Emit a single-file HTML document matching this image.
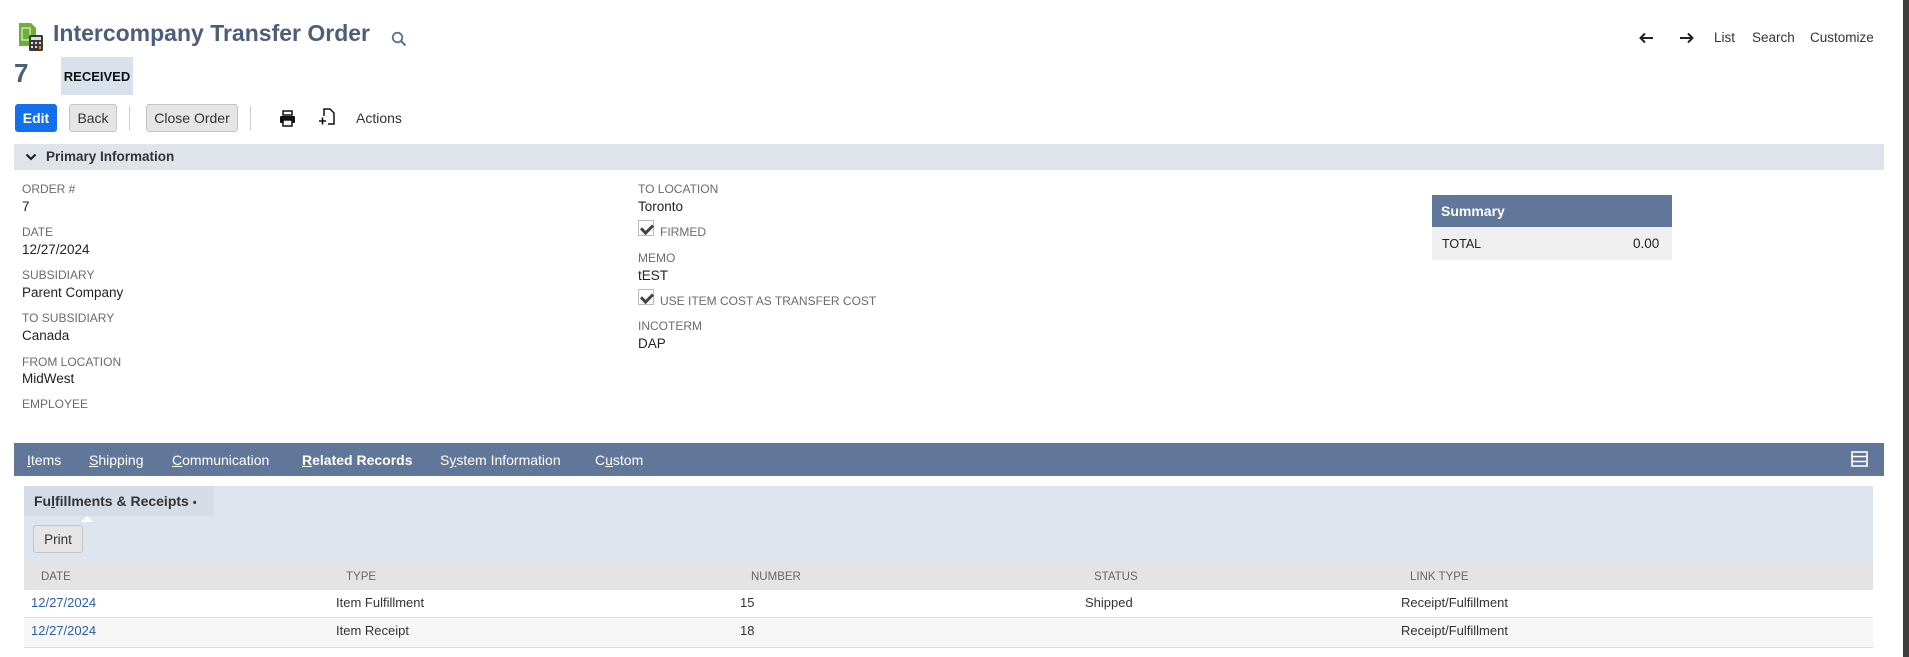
<!DOCTYPE html>
<html><head><meta charset="utf-8"><style>
*{margin:0;padding:0;box-sizing:border-box}
body{width:1909px;height:657px;background:#fff;font-family:"Liberation Sans",sans-serif;position:relative;overflow:hidden;color:#222}
.a{position:absolute;white-space:nowrap}
.lbl{font-size:12px;color:#6b6b6b;text-transform:uppercase}
.val{font-size:13.5px;color:#222}
.btn{position:absolute;height:28px;border:1px solid #c4c4c4;background:#e5e5e5;border-radius:3px;font-size:14px;color:#333;display:flex;align-items:center;justify-content:center}
.cb{position:absolute;width:16px;height:16px;border:1px solid #bbb;background:#fff}
.cb:after{content:"";position:absolute;left:4px;top:1px;width:5px;height:9px;border:solid #444;border-width:0 3px 3px 0;transform:rotate(45deg)}
.tab{position:absolute;top:452px;font-size:14px;color:#fff}
.th{position:absolute;top:571px;font-size:11.5px;color:#666}
.td{position:absolute;font-size:13px;color:#333}
</style></head><body>
<svg class="a" style="left:18px;top:22px" width="27" height="29" viewBox="0 0 27 29">
<path d="M1 1h12l5 5v18H1z" fill="#6cae3a"/><path d="M4 6h8v12H4z" fill="none" stroke="#c9e6a8" stroke-width="1.5"/>
<rect x="11" y="13" width="14" height="16" rx="1.5" fill="#3a3a3a"/><rect x="13" y="15" width="10" height="3" fill="#ddd"/>
<g fill="#ddd"><rect x="13" y="20" width="2" height="2"/><rect x="17" y="20" width="2" height="2"/><rect x="21" y="20" width="2" height="2"/><rect x="13" y="24" width="2" height="2"/><rect x="17" y="24" width="2" height="2"/></g><rect x="21" y="24" width="2" height="3" fill="#f08a24"/>
</svg>
<div class="a" style="left:53px;top:20px;font-size:23px;font-weight:bold;color:#4d5e7b">Intercompany Transfer Order</div>
<svg class="a" style="left:391px;top:31px" width="16" height="16" viewBox="0 0 16 16"><circle cx="6.5" cy="6.5" r="4.8" fill="none" stroke="#5b6f8e" stroke-width="1.8"/><path d="M10 10l4.5 4.5" stroke="#5b6f8e" stroke-width="2"/></svg>
<div class="a" style="left:14px;top:58px;font-size:26px;font-weight:bold;color:#4d5e7b">7</div>
<div class="a" style="left:61px;top:57px;width:72px;height:38px;background:#d8e1ec;font-size:13px;font-weight:bold;color:#111;display:flex;align-items:center;justify-content:center">RECEIVED</div>
<svg class="a" style="left:1639px;top:32px" width="15" height="12" viewBox="0 0 15 12"><path d="M14 6H2M6 1.5L1.5 6 6 10.5" fill="none" stroke="#222" stroke-width="2"/></svg>
<svg class="a" style="left:1679px;top:32px" width="15" height="12" viewBox="0 0 15 12"><path d="M1 6h12M9 1.5L13.5 6 9 10.5" fill="none" stroke="#222" stroke-width="2"/></svg>
<div class="a" style="left:1714px;top:30px;font-size:13.5px;color:#333">List</div>
<div class="a" style="left:1752px;top:30px;font-size:13.5px;color:#333">Search</div>
<div class="a" style="left:1810px;top:30px;font-size:13.5px;color:#333">Customize</div>
<div class="a" style="left:1903px;top:0;width:6px;height:657px;background:#3d3d3d"></div>
<div class="btn" style="left:15px;top:104px;width:42px;background:#1270ec;border-color:#1270ec;color:#fff;font-weight:bold">Edit</div>
<div class="btn" style="left:69px;top:104px;width:48px">Back</div>
<div class="a" style="left:129px;top:106px;width:1px;height:24px;background:#ccc"></div>
<div class="btn" style="left:146px;top:104px;width:92px">Close Order</div>
<div class="a" style="left:250px;top:106px;width:1px;height:24px;background:#ccc"></div>
<svg class="a" style="left:279px;top:110px" width="17" height="17" viewBox="0 0 17 17"><rect x="4" y="1" width="9" height="4" fill="none" stroke="#111" stroke-width="1.5"/><rect x="1" y="6" width="15" height="7" rx="1" fill="#111"/><rect x="4" y="10" width="9" height="6" fill="#fff" stroke="#111" stroke-width="1.5"/></svg>
<svg class="a" style="left:319px;top:108px" width="17" height="18" viewBox="0 0 17 18"><path d="M5 8V1h6l4 4v11H9" fill="none" stroke="#111" stroke-width="1.5"/><path d="M0 13h7M3.5 9.5v7" stroke="#111" stroke-width="1.6"/></svg>
<div class="a" style="left:356px;top:110px;font-size:14px;color:#333">Actions</div>
<div class="a" style="left:14px;top:144px;width:1870px;height:26px;background:#dfe4eb"></div>
<svg class="a" style="left:25px;top:152px" width="12" height="10" viewBox="0 0 12 10"><path d="M1.5 2.5l4.5 4.5 4.5-4.5" fill="none" stroke="#222" stroke-width="2.2"/></svg>
<div class="a" style="left:46px;top:149px;font-size:13.5px;font-weight:bold;color:#333">Primary Information</div>
<div class="a lbl" style="left:22px;top:182px">Order #</div><div class="a val" style="left:22px;top:199px">7</div>
<div class="a lbl" style="left:22px;top:225px">Date</div><div class="a val" style="left:22px;top:242px">12/27/2024</div>
<div class="a lbl" style="left:22px;top:268px">Subsidiary</div><div class="a val" style="left:22px;top:285px">Parent Company</div>
<div class="a lbl" style="left:22px;top:311px">To Subsidiary</div><div class="a val" style="left:22px;top:328px">Canada</div>
<div class="a lbl" style="left:22px;top:355px">From Location</div><div class="a val" style="left:22px;top:371px">MidWest</div>
<div class="a lbl" style="left:22px;top:397px">Employee</div>
<div class="a lbl" style="left:638px;top:182px">To Location</div><div class="a val" style="left:638px;top:199px">Toronto</div>
<div class="cb" style="left:638px;top:220px"></div><div class="a lbl" style="left:660px;top:225px">Firmed</div>
<div class="a lbl" style="left:638px;top:251px">Memo</div><div class="a val" style="left:638px;top:268px">tEST</div>
<div class="cb" style="left:638px;top:289px"></div><div class="a lbl" style="left:660px;top:294px">Use item cost as transfer cost</div>
<div class="a lbl" style="left:638px;top:319px">Incoterm</div><div class="a val" style="left:638px;top:336px">DAP</div>
<div class="a" style="left:1432px;top:195px;width:240px;height:32px;background:#607799;color:#fff;font-size:14px;font-weight:bold;padding:8px 0 0 9px">Summary</div>
<div class="a" style="left:1432px;top:227px;width:240px;height:33px;background:#efefef"></div>
<div class="a" style="left:1442px;top:237px;font-size:12.5px;color:#222">TOTAL</div>
<div class="a" style="left:1633px;top:236px;font-size:13.5px;color:#222">0.00</div>
<div class="a" style="left:14px;top:443px;width:1870px;height:33px;background:#607799"></div>
<div class="tab" style="left:27px"><u>I</u>tems</div>
<div class="tab" style="left:89px"><u>S</u>hipping</div>
<div class="tab" style="left:172px"><u>C</u>ommunication</div>
<div class="tab" style="left:302px;font-weight:bold"><u>R</u>elated Records</div>
<div class="tab" style="left:440px">S<u>y</u>stem Information</div>
<div class="tab" style="left:595px">C<u>u</u>stom</div>
<div class="a" style="left:345px;top:470px;width:0;height:0;border:6px solid transparent;border-bottom-color:#fff"></div>
<svg class="a" style="left:1851px;top:451px" width="17" height="16" viewBox="0 0 17 16"><rect x="1" y="1" width="15" height="14" fill="none" stroke="#fff" stroke-width="1.6"/><path d="M1 5.5h15M1 10.5h15" stroke="#fff" stroke-width="1.6"/></svg>
<div class="a" style="left:24px;top:486px;width:1849px;height:76px;background:#dfe5ee"></div>
<div class="a" style="left:24px;top:486px;width:190px;height:30px;background:#d6dce6"></div>
<div class="a" style="left:34px;top:493px;font-size:14px;font-weight:bold;color:#333">Fu<u>l</u>fillments &amp; Receipts <span style="font-size:11px">•</span></div>
<div class="a" style="left:81px;top:510px;width:0;height:0;border:6px solid transparent;border-bottom-color:#fff"></div>
<div class="btn" style="left:33px;top:525px;width:50px;font-size:13.5px">Print</div>
<div class="a" style="left:24px;top:562px;width:1849px;height:86px;border:1px solid #ddd;border-top:none"></div>
<div class="a" style="left:24px;top:562px;width:1849px;height:28px;background:#e4e4e4"></div>
<div class="a" style="left:24px;top:590px;width:1849px;height:28px;background:#fff;border-bottom:1px solid #e4e4e4"></div>
<div class="a" style="left:24px;top:618px;width:1849px;height:29px;background:#f7f7f7"></div>
<div class="th" style="left:41px">DATE</div>
<div class="th" style="left:346px">TYPE</div>
<div class="th" style="left:751px">NUMBER</div>
<div class="th" style="left:1094px">STATUS</div>
<div class="th" style="left:1410px">LINK TYPE</div>
<div class="td" style="left:31px;top:595px;color:#2a5ea8">12/27/2024</div>
<div class="td" style="left:336px;top:595px">Item Fulfillment</div>
<div class="td" style="left:740px;top:595px">15</div>
<div class="td" style="left:1085px;top:595px">Shipped</div>
<div class="td" style="left:1401px;top:595px">Receipt/Fulfillment</div>
<div class="td" style="left:31px;top:623px;color:#2a5ea8">12/27/2024</div>
<div class="td" style="left:336px;top:623px">Item Receipt</div>
<div class="td" style="left:740px;top:623px">18</div>
<div class="td" style="left:1401px;top:623px">Receipt/Fulfillment</div>
</body></html>
